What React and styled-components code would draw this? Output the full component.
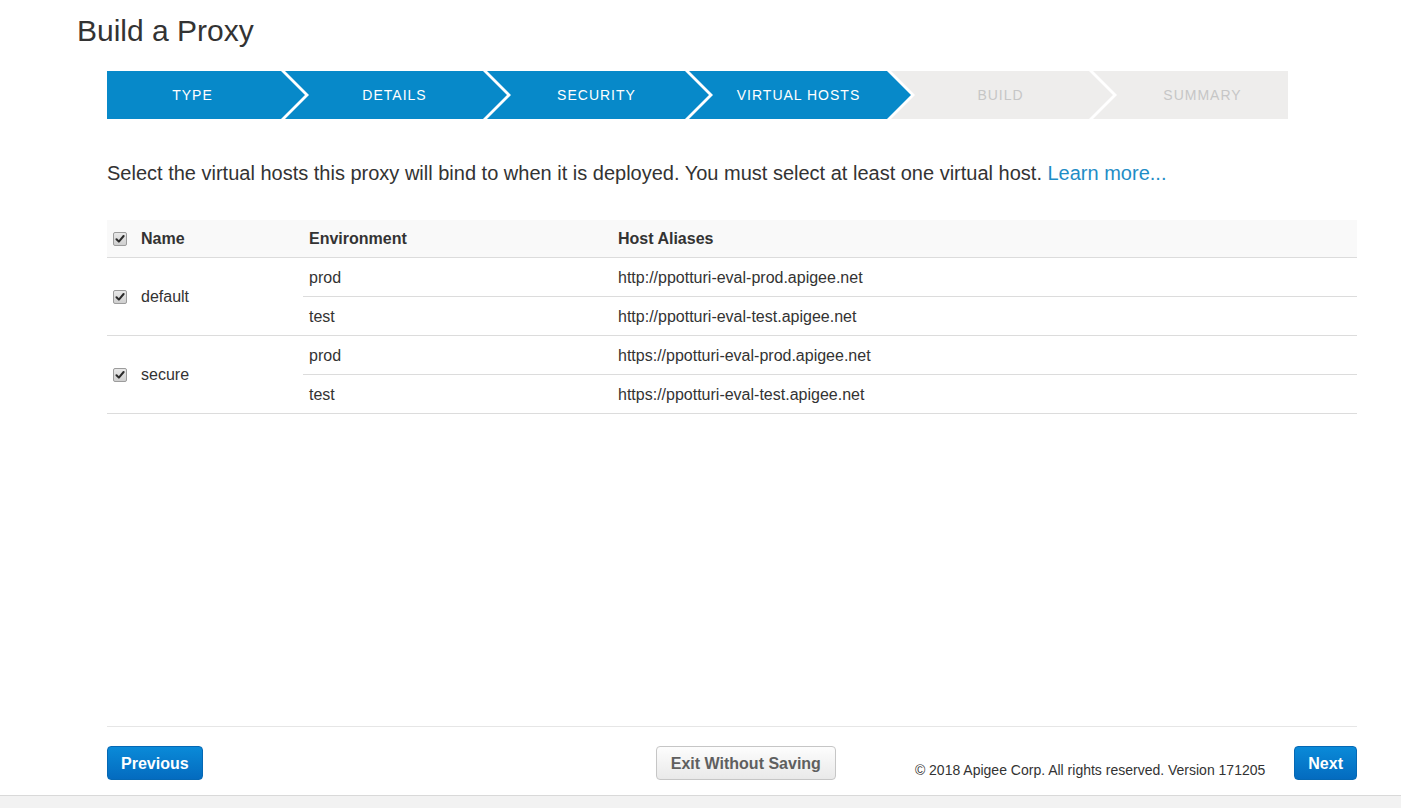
import React from "react";
import styled, { createGlobalStyle, css } from "styled-components";

const GlobalStyle = createGlobalStyle`
  html, body { margin: 0; padding: 0; background: #fff; }
  body { font-family: "Liberation Sans", Arial, sans-serif; color: #333; }
  * { box-sizing: border-box; }
`;

const Page = styled.div`
  height: 100vh;
  display: flex;
  flex-direction: column;
`;

const Main = styled.main`
  flex: 1;
`;

const Title = styled.h1`
  margin: 0;
  padding: 13px 0 0 77px;
  font-size: 30px;
  line-height: 36px;
  font-weight: normal;
  color: #333;
`;

const Content = styled.div`
  padding: 0 44px 0 107px;
`;

const Stepper = styled.div`
  display: flex;
  height: 48px;
  margin-top: 22px;
`;

const Step = styled.div`
  height: 48px;
  display: flex;
  align-items: center;
  justify-content: center;
  font-size: 14px;
  letter-spacing: 1px;
  text-transform: uppercase;
  background: ${(p) => (p.$active ? "#0789c9" : "#eeedec")};
  color: ${(p) => (p.$active ? "#ffffff" : "#c6c6c6")};
  ${(p) =>
    p.$pos === "first"
      ? css`
          width: 198px;
          padding-right: 27px;
          clip-path: polygon(0 0, calc(100% - 24px) 0, 100% 50%, calc(100% - 24px) 100%, 0 100%);
        `
      : p.$pos === "last"
      ? css`
          width: 195px;
          margin-left: -20px;
          padding-left: 24px;
          clip-path: polygon(0 0, 100% 0, 100% 100%, 0 100%, 24px 50%);
        `
      : css`
          width: 222px;
          margin-left: -20px;
          padding: 0 27px 0 24px;
          clip-path: polygon(0 0, calc(100% - 24px) 0, 100% 50%, calc(100% - 24px) 100%, 0 100%, 24px 50%);
        `}
`;

const Intro = styled.p`
  margin: 42px 0 0;
  font-size: 20px;
  line-height: 24px;
  color: #333;
`;

const Link = styled.a`
  color: #1f8dc6;
  text-decoration: none;
`;

const Table = styled.table`
  margin-top: 35px;
  width: 100%;
  border-collapse: collapse;
  font-size: 16px;
`;

const HeadRow = styled.tr`
  background: #f9f9f9;
`;

const Th = styled.th`
  height: 37px;
  padding: 2px 0 0 6px;
  text-align: left;
  font-weight: bold;
  color: #333;
  border-bottom: 1px solid #dcdcdc;
  width: ${(p) => p.$w || "auto"};
`;

const Td = styled.td`
  height: 39px;
  padding: 2px 0 0 6px;
  vertical-align: middle;
  color: #333;
  border-bottom: 1px solid #dcdcdc;
`;

const NameCell = styled.div`
  display: flex;
  align-items: center;
  gap: 14px;
`;

const Box = styled.span`
  width: 14px;
  height: 14px;
  display: inline-flex;
  align-items: center;
  justify-content: center;
  border: 1px solid #9c9c9c;
  border-radius: 2px;
  background: linear-gradient(#e8e8e8, #cfcfcf);
  flex: none;
`;

const Check = () => (
  <Box>
    <svg width="10" height="10" viewBox="0 0 10 10">
      <path d="M1.5 5.2 L3.9 7.6 L8.6 2" fill="none" stroke="#2a2a2a" strokeWidth="2" strokeLinecap="round" strokeLinejoin="round" />
    </svg>
  </Box>
);

const Footer = styled.footer`
  margin: 0 44px 0 107px;
  border-top: 1px solid #e6e6e6;
  padding: 19px 0 15px;
  display: flex;
  align-items: flex-start;
`;

const Button = styled.button`
  height: 34px;
  padding: 2px ${(p) => (p.$secondary ? "14px" : "13px")} 0;
  font-family: "Liberation Sans", Arial, sans-serif;
  font-size: 16px;
  font-weight: bold;
  border-radius: 4px;
  cursor: pointer;
  ${(p) =>
    p.$secondary
      ? css`
          color: #5f5f5f;
          background: linear-gradient(#fdfdfd, #e9e9e9);
          border: 1px solid #c6c6c6;
        `
      : css`
          color: #fff;
          background: linear-gradient(#0a8ad8, #046bbf);
          border: 1px solid #0568b4;
        `}
`;

const Spacer = styled.div`
  flex: 1;
`;

const Copyright = styled.div`
  align-self: flex-end;
  margin: 0 29px 0 79px;
  font-size: 14px;
  line-height: 20px;
  color: #333;
`;

const BottomBar = styled.div`
  height: 13px;
  background: #f2f2f2;
  border-top: 1px solid #d9d9d9;
`;

const steps = [
  { label: "Type", active: true },
  { label: "Details", active: true },
  { label: "Security", active: true },
  { label: "Virtual Hosts", active: true },
  { label: "Build", active: false },
  { label: "Summary", active: false },
];

const hosts = [
  {
    name: "default",
    envs: [
      ["prod", "http://ppotturi-eval-prod.apigee.net"],
      ["test", "http://ppotturi-eval-test.apigee.net"],
    ],
  },
  {
    name: "secure",
    envs: [
      ["prod", "https://ppotturi-eval-prod.apigee.net"],
      ["test", "https://ppotturi-eval-test.apigee.net"],
    ],
  },
];

export default function App() {
  return (
    <>
      <GlobalStyle />
      <Page>
        <Main>
          <Title>Build a Proxy</Title>
          <Content>
            <Stepper>
              {steps.map((s, i) => (
                <Step
                  key={s.label}
                  $active={s.active}
                  $pos={i === 0 ? "first" : i === steps.length - 1 ? "last" : "mid"}
                >
                  {s.label}
                </Step>
              ))}
            </Stepper>
            <Intro>
              Select the virtual hosts this proxy will bind to when it is deployed. You must select at least one
              virtual host. <Link href="#">Learn more...</Link>
            </Intro>
            <Table>
              <thead>
                <HeadRow>
                  <Th $w="196px">
                    <NameCell>
                      <Check />
                      Name
                    </NameCell>
                  </Th>
                  <Th $w="309px">Environment</Th>
                  <Th>Host Aliases</Th>
                </HeadRow>
              </thead>
              <tbody>
                {hosts.map((h) =>
                  h.envs.map(([env, alias], j) => (
                    <tr key={h.name + env}>
                      {j === 0 && (
                        <Td rowSpan={h.envs.length}>
                          <NameCell>
                            <Check />
                            {h.name}
                          </NameCell>
                        </Td>
                      )}
                      <Td>{env}</Td>
                      <Td>{alias}</Td>
                    </tr>
                  ))
                )}
              </tbody>
            </Table>
          </Content>
        </Main>
        <Footer>
          <Button>Previous</Button>
          <Spacer />
          <Button $secondary>Exit Without Saving</Button>
          <Copyright>© 2018 Apigee Corp. All rights reserved. Version 171205</Copyright>
          <Button>Next</Button>
        </Footer>
        <BottomBar />
      </Page>
    </>
  );
}
